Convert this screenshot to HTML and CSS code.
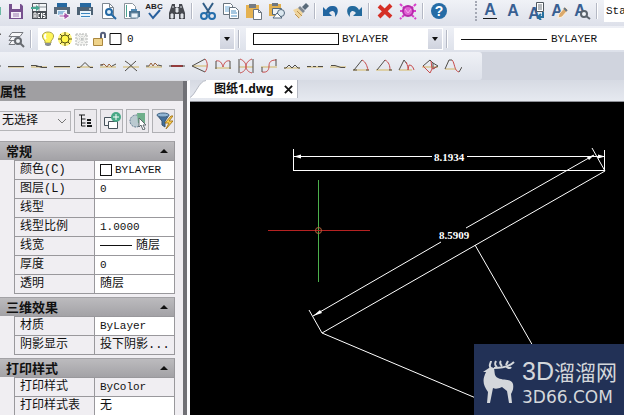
FILE: index.html
```html
<!DOCTYPE html>
<html lang="zh-CN">
<head>
<meta charset="utf-8">
<title>图纸1.dwg</title>
<link rel="stylesheet" href="styles.css">
</head>
<body>
<div class="app">
  <header class="toolbars">
    <div class="toolbar standard">
      <button class="tool first" aria-label="打开"><svg viewBox="0 0 18 18"><path d="M8 5h9v8H8z" fill="#6cb9a4"/></svg></button>
      <button class="tool" aria-label="保存"><svg viewBox="0 0 18 18"><path d="M2 2h12l2 2v13H2z" fill="#76508e"/><path d="M5 2h8v5H5zM4 10h10v6H4z" fill="#f3eef7"/><path d="M6 12h6M6 14h6" stroke="#9b7bb0"/></svg></button>
      <button class="tool" aria-label="ACIS"><svg viewBox="0 0 18 18"><path d="M2.500 1.500h14v15h-14z" fill="#f4f6f8" stroke="#555b62"/><path d="M9 2v7M3 5h13" stroke="#8a9299"/><path d="M1 5h5V3l4 3-4 3V7H1z" fill="#49a893"/><path d="M2 9h15v8H2z" fill="#4a4f55"/><path d="M4 16v-5h2v5M4 14h2M10 11.500H8v4h2M11.500 11v5M15 11.500h-2v2h2v2h-2" fill="none" stroke="#fff"/></svg></button>
      <button class="tool" aria-label="输出"><svg viewBox="0 0 18 18"><path d="M4 1h10v4H4z" fill="#2668a0"/><path d="M1 5h16v7H1z" fill="#586878"/><path d="M4 8h10v6H4z" fill="#e8f2fa"/><path d="M5 10h7M5 12h5" stroke="#3a82bd"/><path d="M6 13h5v-3l6 4-6 4v-3H6z" fill="#a656a8" stroke="#fff"/></svg></button>
      <button class="tool" aria-label="打印"><svg viewBox="0 0 18 18"><path d="M4 1h11v4H4z" fill="#2668a0"/><path d="M1 5h16v8H1z" fill="#4d6275"/><path d="M4 9h11v7H4z" fill="#eaf4fb"/><path d="M5 11.500h9M5 14.500h9" stroke="#3b86c0"/><path d="M13 7h2" stroke="#fff"/></svg></button>
      <button class="tool" aria-label="打印预览"><svg viewBox="0 0 18 18"><path d="M3.500 1.500h7l4 4v11h-11z" fill="#fff" stroke="#7d8791"/><path d="M10.500 1.500v4h4" fill="none" stroke="#7d8791"/><circle cx="10" cy="10" r="3" fill="#e2f0fa" stroke="#2368a4" stroke-width="2"/><path d="M12 12l5 5" stroke="#2368a4" stroke-width="2"/></svg></button>
      <button class="tool" aria-label="发布"><svg viewBox="0 0 18 18"><path d="M2.500 1.500h8l3 3v12h-11z" fill="#fff" stroke="#8b949c"/><path d="M4.500 3v12" stroke="#4aa491"/><path d="M9 7h6v3H9z" fill="#518ab4"/><path d="M7 9h11v6H7z" fill="#49718f"/><path d="M9 11h7v5H9z" fill="#eaf3fa" stroke="#6d8ca3"/></svg></button>
      <button class="tool" aria-label="拼写检查"><svg viewBox="0 0 18 18"><text x="9" y="7" class="spell">ABC</text><path d="M4 11l4 5 7-8" fill="none" stroke="#285f9d" stroke-width="2"/></svg></button>
      <button class="tool" aria-label="查找"><svg viewBox="0 0 18 18"><path d="M4 2h3v3h4V2h3l3 9v6h-6v-5H7v5H1v-6z" fill="#46494f"/><path d="M3 12h2v4H3zM13 12h2v4h-2zM8 6h2v4H8zM4 5h2M12 5h2" fill="#dfe3e8" stroke="#dfe3e8"/></svg></button>
      <span class="sep"></span>
      <button class="tool" aria-label="剪切"><svg viewBox="0 0 18 18"><path d="M4 1l7 11M14 1L7 12" stroke="#315e87" stroke-width="2"/><circle cx="5" cy="14" r="3" fill="none" stroke="#256eac" stroke-width="2"/><circle cx="13" cy="14" r="3" fill="none" stroke="#256eac" stroke-width="2"/></svg></button>
      <button class="tool" aria-label="复制"><svg viewBox="0 0 18 18"><path d="M1.500 1.500h7l2 2v9h-9z" fill="#fff" stroke="#69747e"/><path d="M3 5h5M3 7h5M3 9h4" stroke="#6eabd8"/><path d="M7.500 5.500h6l3 3v8h-9z" fill="#fff" stroke="#69747e"/><path d="M9 9h5M9 11h6M9 14h6" stroke="#4e90c2"/></svg></button>
      <button class="tool" aria-label="粘贴"><svg viewBox="0 0 18 18"><path d="M1 3h13v13H1z" fill="#e5b251"/><path d="M4 2h7v4H4z" fill="#747b84"/><path d="M8.500 7.500h5l3 3v7h-8z" fill="#fff" stroke="#6d7782"/><path d="M13.500 7.500v3h3" fill="none" stroke="#6d7782"/></svg></button>
      <button class="tool" aria-label="粘贴为块"><svg viewBox="0 0 18 18"><path d="M1 2h12v12H1z" fill="#e2b04f"/><path d="M4 1h6v3H4z" fill="#6f7780"/><path d="M4.500 6.500h9v6h-9z" fill="#eef3f7" stroke="#53687c"/><circle cx="13" cy="11" r="3.500" fill="#dce8f0" stroke="#53687c"/><path d="M5 16l4-5 5 5z" fill="#fff" stroke="#53687c"/></svg></button>
      <button class="tool" aria-label="特性匹配"><svg viewBox="0 0 18 18"><path d="M2 8l5-2 5 5-4 6z" fill="#efd49b"/><path d="M4 12l4 4M6 9l5 5" stroke="#bb9151"/><path d="M7 6l2-2 5 5-2 2z" fill="#808891"/><path d="M11 5l4-4 3 3-4 4z" fill="#596a7a"/></svg></button>
      <span class="sep"></span>
      <button class="tool" aria-label="撤销"><svg viewBox="0 0 18 18"><path d="M1 5v9h9l-3-3c3-4 7-2 6 4 5-5 3-12-3-11-3 0-5 2-6 4z" fill="#2265a0"/></svg></button>
      <button class="tool" aria-label="重做"><svg viewBox="0 0 18 18"><path d="M17 5v9H8l3-3C8 7 4 9 5 15 0 10 2 3 8 4c3 0 5 2 6 4z" fill="#236a9d"/></svg></button>
      <span class="sep"></span>
      <button class="tool" aria-label="删除"><svg viewBox="0 0 18 18"><path d="M3 4l12 11M15 3L3 15" stroke="#d52f25" stroke-width="4"/></svg></button>
      <button class="tool" aria-label="清理"><svg viewBox="0 0 18 18"><path d="M1 2l16 15M17 2L1 17M1 9h3M14 9h3" stroke="#d93fcb" stroke-width="2" stroke-dasharray="3 1"/><circle cx="9" cy="9" r="5" fill="#df62d3" stroke="#b529aa" stroke-width="2"/><path d="M6 7l3 4 3-4" fill="none" stroke="#f6a6ed"/></svg></button>
      <span class="sep"></span>
      <button class="tool" aria-label="帮助"><svg viewBox="0 0 18 18"><circle cx="9" cy="9" r="8" fill="#256ca6"/><text x="9" y="14" class="help">?</text></svg></button>
      <span class="grip"></span>
      <button class="tool" aria-label="单行文字"><svg viewBox="0 0 18 18"><text x="9" y="13" class="letter">A</text><path d="M2 16.500h14" stroke="#17191c"/></svg></button>
      <button class="tool" aria-label="多行文字"><svg viewBox="0 0 18 18"><text x="9" y="14" class="letter">A</text></svg></button>
      <button class="tool" aria-label="文字字段"><svg viewBox="0 0 18 18"><text x="7" y="17" class="letter">A</text><path d="M9.500.500h7v9h-7z" fill="#fff" stroke="#4e565e"/><path d="M11 3h4M11 5h4M11 7h4" stroke="#6d757d"/><path d="M16 10v5h-4M14 12l-3 3 3 3" fill="none" stroke="#26709f" stroke-width="2"/></svg></button>
      <button class="tool" aria-label="编辑文字"><svg viewBox="0 0 18 18"><text x="7" y="14" class="letter">A</text><path d="M8 16l1-4 6-7 3 3-6 7z" fill="#dba96b" stroke="#fff0dc"/><path d="M14 6l3 3" stroke="#657789" stroke-width="2"/></svg></button>
      <button class="tool" aria-label="查找文字"><svg viewBox="0 0 18 18"><text x="7" y="14" class="letter">A</text><circle cx="11" cy="12" r="3" fill="#f4f7fa" stroke="#5c646c" stroke-width="2"/><path d="M13 14l4 3" stroke="#5c646c" stroke-width="2"/></svg></button>
      <span class="sep"></span>
      <select class="combo style-combo" aria-label="文字样式"><option>Standard</option></select>
    </div>
    <div class="toolbar layers">
      <button class="tool first" aria-label="图层"><svg viewBox="0 0 18 18"><path d="M8 4h9l-4 4H6z" fill="none" stroke="#666"/></svg></button>
      <button class="tool" aria-label="图层查找"><svg viewBox="0 0 18 18"><path d="M5 2.500h11l-3 4H2zM5 6.500l-3 4h6M5 10.500l-3 4h6" fill="#f8f8fa" stroke="#777a80"/><circle cx="11" cy="11" r="3" fill="#eef1f5" stroke="#666a70" stroke-width="2"/><path d="M13 13l4 4" stroke="#666a70" stroke-width="2"/></svg></button>
      <span class="sep tall"></span>
      <div class="field layer-field">
        <select class="combo" aria-label="当前图层"><option>0</option></select>
        <div class="adorn">
          <svg viewBox="0 0 16 16"><path d="M5 10C0 5 3 1 8 1s8 4 3 9v2H5z" fill="#fff55a" stroke="#aaa24b"/><path d="M6 3c-2 2-1 4 0 5" stroke="#fff" stroke-width="2" fill="none"/><path d="M5 12h6v2l-2 1H7l-2-1z" fill="#8b8f93"/></svg>
          <svg viewBox="0 0 16 16"><circle cx="8" cy="8" r="7" fill="#fff47c"/><path d="M8 1v14M1 8h14M3 3l10 10M13 3L3 13" stroke="#5b5712"/><circle cx="8" cy="8" r="4" fill="#fff64a" stroke="#5b5712"/></svg>
          <svg viewBox="0 0 16 16"><path d="M2 3h11v11H2z" fill="#f2f2ef" stroke="#b3b5b3" stroke-dasharray="2 1"/><path d="M8 3v10M3 8h10M4 4l8 8M12 4l-8 8" stroke="#b7bbbb" stroke-dasharray="1 1"/></svg>
          <svg viewBox="0 0 16 16"><path d="M10 8V4c0-3 4-3 4 0v3" fill="none" stroke="#555f7a" stroke-width="2"/><path d="M2.500 7.500h9v7h-9z" fill="#efd38a" stroke="#aa873f"/></svg>
          <svg viewBox="0 0 16 16"><path d="M2 2.500h11v11H2z" fill="#fff" stroke="#111"/></svg>
        </div>
      </div>
      <span class="sep tall"></span>
      <div class="field color-field">
        <select class="combo" aria-label="颜色"><option>BYLAYER</option></select>
        <div class="adorn"><span class="color-box"></span></div>
      </div>
      <span class="sep tall"></span>
      <div class="field line-field">
        <select class="combo plain" aria-label="线型"><option>BYLAYER</option></select>
        <div class="adorn"><span class="line-sample"></span></div>
      </div>
    </div>
    <div class="toolbar curves">
      <button class="tool first" aria-label="直线"><svg viewBox="0 0 18 18"><path d="M14 9h3" stroke="#555"/></svg></button>
      <button class="tool" aria-label="线一"><svg viewBox="0 0 18 18"><path class="tan" d="M1 10h16"/><path class="ink" d="M1 9.500h16"/></svg></button>
      <button class="tool" aria-label="线二"><svg viewBox="0 0 18 18"><path class="tan" d="M1 10h16"/><path class="ink" d="M1 8.500h5l6 2h5M6 9.500h6"/></svg></button>
      <button class="tool" aria-label="线三"><svg viewBox="0 0 18 18"><path class="tan" d="M1 10h16"/><path class="ink" d="M1 9.500h16"/></svg></button>
      <button class="tool" aria-label="三角"><svg viewBox="0 0 18 18"><path class="tan" d="M1 10h16"/><path class="ink" d="M1 10.500h3l5-5 5 5h3"/></svg></button>
      <button class="tool" aria-label="折线"><svg viewBox="0 0 18 18"><path class="tan" d="M1 10h16"/><path class="rust" d="M2 8l3-1 3 3 2-3 3 3"/><path class="ink" d="M1 8h3M13 9l4-2"/></svg></button>
      <button class="tool" aria-label="交叉"><svg viewBox="0 0 18 18"><path class="tan" d="M1 10h16"/><path class="ink" d="M3 4c5 3 7 6 12 10M3 14L14 4"/></svg></button>
      <button class="tool" aria-label="波浪"><svg viewBox="0 0 18 18"><path class="tan" d="M1 10h16"/><path class="rust" d="M4 9l2-3 2 3 2-3 3 3"/><path class="ink" d="M1 9h3M13 8l4 1"/></svg></button>
      <button class="tool" aria-label="粗线"><svg viewBox="0 0 18 18"><path d="M3 9h12" stroke="#943b3c" stroke-width="2"/><path class="ink" d="M1 9h3M14 9h3"/></svg></button>
      <button class="tool" aria-label="扇形"><svg viewBox="0 0 18 18"><path class="tan" d="M2 9h14"/><path class="ink" d="M14 2L1 9l13 6"/><path class="red" d="M14 2c3 3 3 9 0 13"/></svg></button>
      <button class="tool" aria-label="双弧"><svg viewBox="0 0 18 18"><path class="tan" d="M1 11h16"/><path class="red" d="M2 4c4-1 6 2 7 6 1-4 3-7 7-6"/><path class="ink" d="M2 4v8M16 4v8"/></svg></button>
      <button class="tool" aria-label="双扇"><svg viewBox="0 0 18 18"><path class="tan" d="M2 10h14"/><path class="red" d="M3 2c8 3 8 12 0 14M15 2C7 5 7 14 15 16"/><path class="ink" d="M2 2v14M16 2v14"/></svg></button>
      <button class="tool" aria-label="反弧"><svg viewBox="0 0 18 18"><path class="tan" d="M1 10h16"/><path class="red" d="M2 15c6 1 7-3 7-6 0-4 2-6 7-6"/><path class="ink" d="M2 10v5M16 2v7"/></svg></button>
      <button class="tool" aria-label="双峰"><svg viewBox="0 0 18 18"><path class="tan" d="M1 11h16"/><path class="ink" d="M1 11h2l3-3 3 3 3-3 3 3h2"/></svg></button>
      <button class="tool" aria-label="虚线"><svg viewBox="0 0 18 18"><path class="tan" d="M1 10h16"/><path class="ink" d="M1 9.500h4M7 9.500h3M12 9.500h5"/></svg></button>
      <button class="tool" aria-label="断线"><svg viewBox="0 0 18 18"><path class="tan" d="M1 10h16"/><path class="ink" d="M2 8.500h4l6 2h4"/></svg></button>
      <button class="tool" aria-label="弧一"><svg viewBox="0 0 18 18"><path class="tan" d="M1 13h16"/><path class="ink" d="M2 13l8-10M1 13h4M14 13h3"/><path class="red" d="M10 3c4 2 5 6 6 10"/></svg></button>
      <button class="tool" aria-label="弧二"><svg viewBox="0 0 18 18"><path class="tan" d="M1 13h16"/><path class="ink" d="M2 13l8-10"/><path class="red" d="M10 3c4 2 5 6 5 10"/><path class="ink" d="M14 13h3"/></svg></button>
      <button class="tool" aria-label="弧三"><svg viewBox="0 0 18 18"><path class="tan" d="M1 13h13"/><path class="ink" d="M1 13L6 3l3 4"/><path class="red" d="M8 5c2 4 2 6 2 8l1-5c3 0 4 2 5 5"/></svg></button>
      <button class="tool" aria-label="菱形"><svg viewBox="0 0 18 18"><path class="tan" d="M1 10h16"/><path class="ink" d="M2 9l7-6 3 3M12 6v6l5-3z"/><path class="red" d="M2 9l7 7 2-4M10 4l1 8 4-2"/></svg></button>
      <button class="tool" aria-label="样条"><svg viewBox="0 0 18 18"><path class="tan" d="M1 12h11"/><path class="ink" d="M1 12L5 3h3M15 15l3-5"/><path class="red" d="M8 3c3 3 2 11 7 12"/></svg></button>
    </div>
  </header>
  <div class="workspace">
    <aside class="panel">
      <h2 class="panel-title">属性</h2>
      <div class="panel-body">
        <div class="picker">
          <div class="chooser">
            <select aria-label="选择对象"><option>无选择</option></select>
            <svg viewBox="0 0 10 6"><path d="M1 1l4 4 4-4" fill="none" stroke="#777"/></svg>
          </div>
          <button aria-label="列表"><svg viewBox="0 0 18 18"><path d="M2 3h6M4.500 3v11h4M4.500 7h4M4.500 11h4" stroke="#17191a" fill="none"/><path d="M10 8h4M10 11h4M10 14h5" stroke="#17191a" stroke-width="2"/></svg></button>
          <button aria-label="新选择"><svg viewBox="0 0 18 18"><path d="M1.500 5.500h9v8h-9z" fill="#f3f4f6" stroke="#46525b"/><path d="M5.500 9.500h9v7h-9z" fill="#fff" stroke="#46525b"/><circle cx="13" cy="5" r="5" fill="#49a987"/><path d="M10 5h6M13 2v6" stroke="#fff"/></svg></button>
          <button aria-label="选择对象"><svg viewBox="0 0 18 18"><circle cx="7" cy="9" r="6" fill="#bac9d0" stroke="#59738a" stroke-dasharray="2 1"/><path d="M8 1h8v10H9z" fill="#6faf8b"/><path d="M10 6l7 7h-3l2 4-2 1-2-5-2 2z" fill="#fff" stroke="#606a70"/></svg></button>
          <button aria-label="快速选择"><svg viewBox="0 0 18 18"><path d="M2 3h12l-4 6v6l-3-2V9z" fill="#426f9d" stroke="#36546f"/><ellipse cx="8" cy="3" rx="6" ry="2" fill="#91b5d4" stroke="#426485"/><path d="M16 4l-6 7h4l-3 6 7-8h-4l4-5z" fill="#ffd34d" stroke="#a87a20"/></svg></button>
        </div>
        <section>
          <h3>常规<i></i></h3>
          <table>
            <tr><th>颜色(C)</th><td><span class="swatch"></span><span class="value">BYLAYER</span></td></tr>
            <tr><th>图层(L)</th><td class="value">0</td></tr>
            <tr><th>线型</th><td></td></tr>
            <tr><th>线型比例</th><td class="value">1.0000</td></tr>
            <tr><th>线宽</th><td><span class="weight"></span>随层</td></tr>
            <tr><th>厚度</th><td class="value">0</td></tr>
            <tr><th>透明</th><td>随层</td></tr>
          </table>
        </section>
        <section>
          <h3>三维效果<i></i></h3>
          <table>
            <tr><th>材质</th><td class="value">ByLayer</td></tr>
            <tr><th>阴影显示</th><td class="muted">投下阴影...</td></tr>
          </table>
        </section>
        <section>
          <h3>打印样式<i></i></h3>
          <table>
            <tr><th>打印样式</th><td class="value muted">ByColor</td></tr>
            <tr><th>打印样式表</th><td>无</td></tr>
          </table>
        </section>
      </div>
    </aside>
    <main class="document">
      <div class="tabs">
        <svg class="slant" viewBox="0 0 16 18"><path d="M0 18C6 14 9 1 16 0v18z" fill="#fff"/><path d="M0 17.500C6 14 9 1 16 .500" fill="none" stroke="#b4b8c2"/></svg>
        <div class="tab"><a href="#drawing">图纸1.dwg</a><button aria-label="关闭"><svg viewBox="0 0 10 10"><path d="M1 1l8 8M9 1L1 9" stroke="#111" stroke-width="2"/></svg></button></div>
      </div>
      <div class="canvas" id="drawing">
        <svg class="drawing" viewBox="190 102 434 313">
          <g stroke="#fff" fill="none">
            <path d="M293.500 149v22M604.500 150v21M294 170.500h311M294 156.500h138M467 156.500h138"/>
            <path d="M309 310l13 23M592 148l13 23M313 316l128-74M466 228l128-73"/>
            <path d="M605 171L322 333l168 71M475 245l66 115"/>
          </g>
          <path d="M294 156.500l7-2v4zM605 156.500l-7-2v4zM313 316l7-6 2 3zM594 155l-7 2 2 3z" fill="#fff"/>
          <path d="M318.500 180v102" stroke="#4cb04c"/>
          <path d="M268 230.500h102" stroke="#b52222"/>
          <circle cx="318.500" cy="230.500" r="3" fill="none" stroke="#b8643c"/>
          <text x="449" y="161">8.1934</text>
          <text x="454" y="239">8.5909</text>
        </svg>
        <div class="badge">
          <svg class="deer" viewBox="0 0 34 44"><path d="M1 12l6-4 2-1 3 1c1 5 0 8 4 10 6 3 13 0 15 6 1 5-1 8-2 10l1 9h-3l-2-12-5-4c-4 2-7 2-9 1l-1 5-2 10H5l1-11C1 25 0 20 4 12z" fill="#d4d7db"/><path d="M9 8C6 6 9 3 9 1M12 8c6 0 15-1 20-6M15 7c-3-2-2-4-1-6M20 6c-2-2-2-4-1-5M24 6c1 2 4 3 5 1M24 5l2-4" fill="none" stroke="#d4d7db" stroke-width="2"/></svg>
          <div class="brand"><div class="brand-name"><span>3D</span>溜溜网</div><div class="brand-site">3D66.COM</div></div>
        </div>
      </div>
    </main>
  </div>
</div>
</body>
</html>
```
FILE: styles.css
```css
* { box-sizing: border-box; }
body {
  margin: 0;
  overflow: hidden;
  background: #d0d4de;
  color: #111;
  font: 12px/18px "Liberation Mono", "Noto Sans CJK SC", monospace;
}
button, select { font: inherit; color: inherit; margin: 0; }
button { padding: 0; border: 0; background: none; }
svg { display: block; flex: none; }
.app { height: 100vh; display: flex; flex-direction: column; }
.toolbars { flex: none; overflow: hidden; }
.toolbar { display: flex; align-items: center; }
.tool {
  flex: none;
  width: 23px;
  height: 22px;
  display: grid;
  place-items: center;
}
.tool svg { width: 18px; height: 18px; }
.tool.first { margin-left: -19px; }
.standard { height: 26px; padding-bottom: 4px; background: linear-gradient(#f0f2f7, #dde0ea); }
.sep {
  flex: none;
  width: 2px;
  height: 16px;
  margin: 0 3px;
  background: linear-gradient(90deg, #b4b8c4 50%, #fff 50%);
}
.grip { flex: none; margin: 0 1px 0 25px; height: 20px; border-left: 2px dotted #a4a8b4; }
.spell { font: bold 8px "Liberation Sans", sans-serif; text-anchor: middle; fill: #222; }
.help { font: bold 14px "Liberation Sans", sans-serif; text-anchor: middle; fill: #fff; }
.letter { font: bold 16px "Liberation Sans", sans-serif; text-anchor: middle; fill: #385f92; }

.combo {
  appearance: none;
  border: 0;
  border-radius: 0;
  background: #fff;
  font-size: 11px;
}
.style-combo { flex: 1; min-width: 0; height: 22px; margin-left: 3px; padding: 0 0 0 2px; }

.layers { height: 26px; background: linear-gradient(#eef0f6, #dde1ea); }
.layers .sep.tall { height: 18px; }
.field { display: grid; flex: none; height: 22px; background: #fff; }
.field > * { grid-area: 1 / 1; }
.field .combo {
  width: 100%;
  background: #fff linear-gradient(#e6e8f0, #cfd3de) right 1px center / 14px 20px no-repeat;
}
.field::after {
  content: "";
  grid-area: 1 / 1;
  place-self: center end;
  margin-right: 5px;
  border: 3px solid transparent;
  border-top: 4px solid #111;
  border-bottom: 0;
  pointer-events: none;
}
.adorn { display: flex; align-items: center; gap: 1px; pointer-events: none; }
.adorn svg { width: 16px; height: 16px; }
.layer-field { width: 197px; margin-left: 3px; }
.layer-field .adorn { padding-left: 2px; }
.layer-field .combo { padding: 0 0 0 89px; }
.color-field { width: 197px; margin-left: 3px; }
.color-field .combo { padding: 0 0 0 96px; }
.color-box { width: 86px; height: 12px; margin-left: 7px; border: 1px solid #111; }
.line-field { flex: 1; margin-left: 3px; }
.line-field .combo { padding: 0 0 0 97px; background: #fff; }
.line-field::after { content: none; }
.line-sample { width: 86px; height: 1px; margin-left: 7px; background: #111; }

.curves {
  width: 482px;
  height: 28px;
  background: linear-gradient(#eff1f6, #dde1ea);
  border-radius: 0 3px 3px 0;
}
.curves path { fill: none; }
.curves .tan { stroke: #dccfa8; stroke-width: 2; }
.curves .ink { stroke: #504d48; }
.curves .rust { stroke: #97613b; }
.curves .red { stroke: #c84b4b; }

.workspace { flex: 1; min-height: 0; display: flex; }
.panel {
  width: 190px;
  flex: none;
  overflow: hidden;
  background: #f0eef2;
  border-right: 3px solid #fafafc;
  border-top: 1px solid #dadce2;
}
.panel-title {
  height: 20px;
  margin: 0;
  background: #a09fa2;
  border-right: 4px solid #707075;
  font: bold 13px/20px "Noto Sans CJK SC", sans-serif;
}
.panel-body { border-right: 4px solid #707075; padding-right: 8px; height: 100%; }
.picker { display: flex; align-items: center; gap: 3px; padding: 8px 0; }
.chooser { display: grid; flex: 1; align-items: center; }
.chooser > * { grid-area: 1 / 1; }
.chooser select {
  appearance: none;
  width: 100%;
  height: 20px;
  padding: 0 2px;
  border: 1px solid #b5b5b8;
  border-left: 0;
  border-radius: 0;
  background: #efedf0;
}
.chooser svg { width: 10px; height: 6px; justify-self: end; margin-right: 4px; pointer-events: none; }
.picker button {
  width: 23px;
  height: 24px;
  display: grid;
  place-items: center;
  border: 1px solid #b0b0b4;
  background: #ebe9ed;
}
.picker button svg { width: 18px; height: 18px; }
section { padding-bottom: 3px; }
h3 {
  display: flex;
  justify-content: space-between;
  align-items: center;
  height: 19px;
  margin: 0;
  padding: 0 6px;
  background: linear-gradient(#bcbbbe, #a3a2a6);
  border-top: 1px solid #a3a2a6;
  border-right: 1px solid #98979b;
  font: bold 13px/18px "Noto Sans CJK SC", sans-serif;
}
h3 i { border: 4px solid transparent; border-bottom: 4px solid #111; border-top: 0; }
table {
  width: 161px;
  margin-left: auto;
  border-spacing: 0;
  table-layout: fixed;
  border: solid #99989c;
  border-width: 0 1px 1px;
}
tr { height: 19px; }
th, td {
  height: 19px;
  padding: 0 0 0 5px;
  border-top: 1px solid #99989c;
  font-weight: normal;
  text-align: left;
  white-space: nowrap;
  overflow: hidden;
}
th { width: 79px; }
td { border-left: 1px solid #99989c; background: #fff; }
td.muted { background: #f0eef2; }
.value { font-size: 11px; }
.swatch {
  display: inline-block;
  width: 12px;
  height: 12px;
  margin-right: 3px;
  border: 1px solid #111;
  vertical-align: middle;
}
.weight {
  display: inline-block;
  width: 32px;
  margin-right: 4px;
  border-top: 1px solid #111;
  vertical-align: middle;
}

.document { flex: 1; min-width: 0; display: flex; flex-direction: column; }
.tabs {
  display: flex;
  align-items: flex-end;
  height: 22px;
  flex: none;
  padding-bottom: 3px;
  background: linear-gradient(#d6dae3, #e6e9f0);
  border-bottom: 1px solid #8e9097;
}
.slant { width: 16px; height: 18px; }
.tab {
  display: flex;
  align-items: center;
  gap: 10px;
  height: 18px;
  padding: 0 4px 0 8px;
  background: #fff;
  border-right: 1px solid #b4b8c2;
}
.tab a { color: #111; text-decoration: none; font: bold 12px/18px "Noto Sans", "Noto Sans CJK SC", sans-serif; }
.tab button svg { width: 9px; height: 9px; }
.canvas { position: relative; flex: 1; min-height: 0; background: #000; overflow: hidden; }
.drawing { width: 434px; height: 313px; }
.drawing text { font: bold 11px "Liberation Serif", serif; fill: #fff; text-anchor: middle; }
.badge {
  position: absolute;
  right: 0;
  bottom: 0;
  display: flex;
  align-items: center;
  gap: 6px;
  padding: 12px 7px 8px 8px;
  background: #223156;
  color: #d4d7db;
}
.deer { width: 34px; height: 44px; }
.brand-name {
  display: flex;
  align-items: center;
  height: 31px;
  font: 21px/31px "Noto Sans CJK SC", sans-serif;
}
.brand-name span { font: 25px/31px "Liberation Sans", sans-serif; }
.brand-site { font: 17px/20px "DejaVu Sans", sans-serif; }
```
